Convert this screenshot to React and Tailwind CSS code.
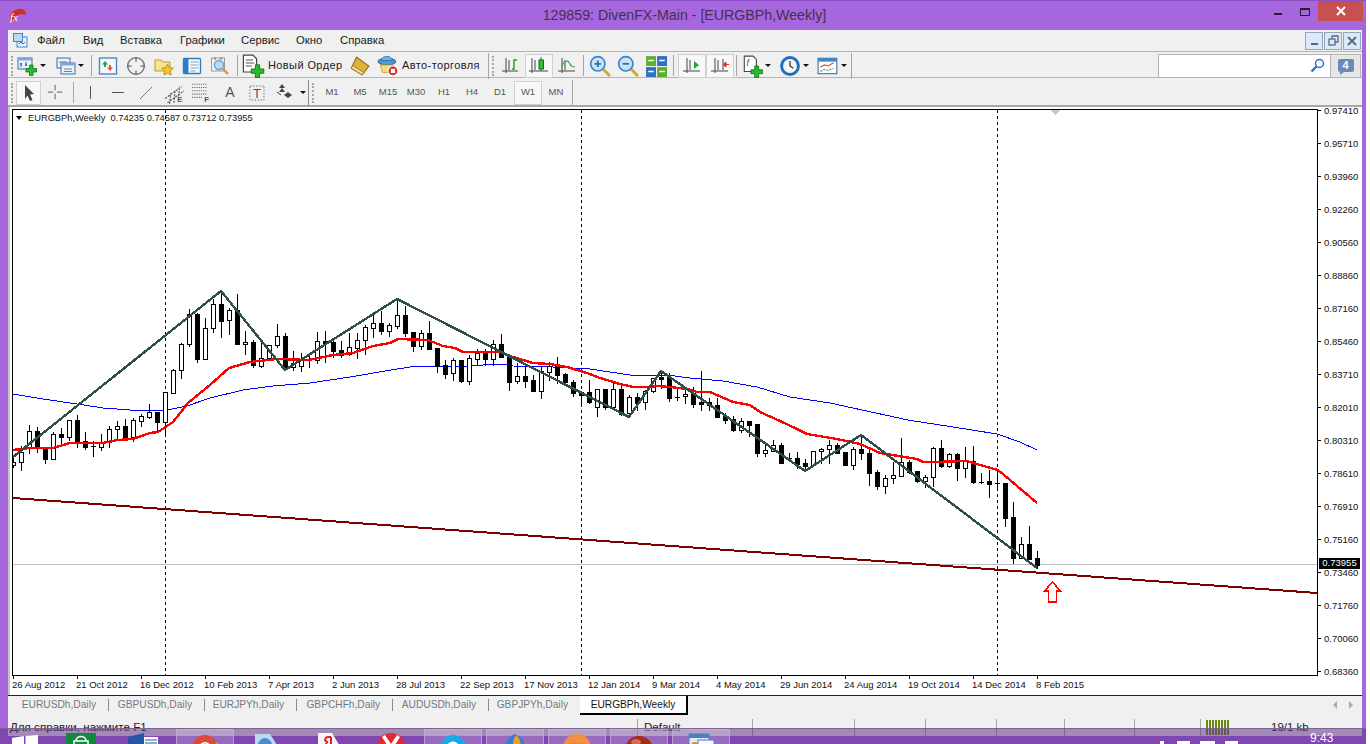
// MT4 terminal window - EURGBPh weekly chart
import { Crosshair } from 'lucide-react';

const PRICES = ['0.97410','0.95710','0.93960','0.92260','0.90560','0.88860','0.87160','0.85460','0.83710','0.82010','0.80310','0.78610','0.76910','0.75160','0.73460','0.71760','0.70060','0.68360'];
const DATES = ['26 Aug 2012','21 Oct 2012','16 Dec 2012','10 Feb 2013','7 Apr 2013','2 Jun 2013','28 Jul 2013','22 Sep 2013','17 Nov 2013','12 Jan 2014','9 Mar 2014','4 May 2014','29 Jun 2014','24 Aug 2014','19 Oct 2014','14 Dec 2014','8 Feb 2015'];
const MENU = [['Файл', 'w-[46px]'], ['Вид', 'w-[37px]'], ['Вставка', 'w-[60px]'], ['Графики', 'w-[61px]'], ['Сервис', 'w-[55px]'], ['Окно', 'w-[44px]'], ['Справка', 'w-[60px]']];
const TABS = [['EURUSDh,Daily', 'w-[101px]'], ['GBPUSDh,Daily', 'w-[96px]'], ['EURJPYh,Daily', 'w-[92px]'], ['GBPCHFh,Daily', 'w-[96px]'], ['AUDUSDh,Daily', 'w-[96px]'], ['GBPJPYh,Daily', 'w-[91px]']];
const PERIODS = ['M1', 'M5', 'M15', 'M30', 'H1', 'H4', 'D1', 'W1', 'MN'];
const STATUS = ['w-[115px]', 'w-[102px]', 'w-[71px]', 'w-[71px]', 'w-[68px]', 'w-[70px]', 'w-[66px]'];

// top, bottom, wick top, wick bottom, black? - one bar every 8px starting at x=13
const CANDLES = [
  [462,465,458,467,0],[452,462,446,470,0],[431,448,425,453,0],[431,448,427,452,1],[449,459,448,463,1],[434,459,432,459,0],[434,437,428,444,1],[420,437,420,440,0],
  [420,442,415,447,1],[441,447,432,449,1],[446,446,441,456,1],[443,447,434,450,0],[429,442,426,447,0],[426,429,421,438,0],[426,438,419,439,1],[420,437,418,441,0],
  [416,421,414,426,0],[412,417,404,418,0],[412,422,412,432,1],[392,422,392,433,0],[370,393,369,393,0],[344,370,343,378,0],[314,344,309,346,0],[314,359,313,362,1],
  [328,359,318,359,0],[304,328,299,332,0],[304,321,291,337,1],[310,320,308,334,0],[310,344,294,344,1],[342,344,331,354,0],[342,365,340,367,1],[358,366,340,367,0],
  [345,358,345,360,0],[336,345,324,347,0],[336,367,333,367,1],[363,367,351,370,0],[360,366,353,371,0],[360,360,353,367,1],[341,360,332,363,0],[341,343,331,362,1],
  [342,351,341,357,1],[350,355,341,357,1],[347,354,333,355,0],[340,348,333,358,0],[327,340,325,354,0],[323,328,315,337,0],[323,331,311,334,1],[325,331,323,336,0],
  [315,326,300,328,0],[315,333,306,336,1],[332,346,332,351,1],[333,346,330,349,0],[333,349,321,349,1],[348,366,348,372,1],[365,374,360,378,1],[360,373,358,380,0],
  [360,381,360,382,1],[358,381,355,384,0],[353,359,349,365,0],[353,359,349,365,1],[344,359,340,365,0],[344,357,334,357,1],[355,382,355,390,1],[376,381,363,383,0],
  [376,381,363,387,1],[380,391,375,391,1],[371,391,367,398,0],[366,372,362,380,0],[366,375,357,383,1],[374,382,373,385,1],[382,393,380,396,1],[392,395,391,406,1],
  [392,402,380,403,1],[389,407,389,416,0],[389,407,389,409,1],[389,407,383,408,0],[389,414,383,415,1],[397,413,395,417,0],[397,403,393,410,1],[391,402,390,409,0],
  [378,391,378,392,0],[377,379,371,388,1],[377,398,373,401,1],[397,397,387,400,1],[394,396,388,403,0],[393,404,387,407,1],[402,404,371,410,1],[402,405,398,410,1],
  [405,417,398,417,1],[416,420,413,423,1],[419,430,416,431,1],[421,430,418,432,0],[421,425,421,436,1],[424,453,424,456,1],[450,453,444,456,0],[445,451,440,451,0],
  [445,463,443,463,1],[458,458,453,460,1],[458,464,452,468,1],[463,466,459,471,1],[451,465,451,466,0],[449,451,448,463,0],[445,449,440,463,0],[445,453,443,453,1],
  [452,465,452,465,1],[449,465,447,469,0],[449,453,435,459,1],[453,473,448,485,1],[472,486,470,489,1],[478,486,475,493,0],[475,478,462,483,0],[462,476,438,476,0],
  [462,472,460,473,1],[471,481,471,482,1],[477,481,475,487,0],[448,477,447,486,0],[448,466,440,467,1],[454,466,453,467,0],[454,468,453,480,1],[461,468,447,477,0],
  [461,482,446,483,1],[482,482,473,483,1],[481,484,470,497,1],[483,483,470,489,1],[483,518,483,526,1],[517,558,502,563,1],[544,558,537,558,0],[544,559,526,559,1],[558,565,551,568,1],
];

const ZIGZAG = '13,457 221,291 285,370 397,299 629,417 661,371 805,471 861,435 1037,568';
const RED_MA = '13,450 30,448 53,448 70,443 103,443 117,440 133,439 150,433 158,432 173,422 188,403 210,385 229,368 250,362 277,359 309,360 333,355 353,353 373,346 390,343 398,339 428,340 443,346 455,348 463,352 500,352 513,357 533,363 550,364 567,367 587,373 600,378 620,384 633,387 650,387 657,386 670,387 687,389 697,392 710,392 733,402 750,405 760,412 780,421 797,429 807,434 837,439 860,444 880,453 917,459 923,462 933,462 967,461 980,465 998,470 1010,480 1037,503';
const BLUE_MA = '13,394 43,399 77,404 103,408 130,410 167,410 187,406 210,398 243,390 273,386 310,383 350,377 397,369 417,366 467,366 500,364 513,366 553,367 590,369 630,375 667,375 690,378 723,381 757,387 790,397 830,403 908,420 953,427 997,434 1020,442 1037,450';

const Grip = () => <div className="h-[20px] w-[3px] border-l-2 border-dotted border-[#a8a8a8]" />;
const Sep = ({ className = '' }) => <div className={`h-[21px] w-px shrink-0 bg-[#a6a6a6] ${className}`} />;
const Caret = ({ className = 'w-[10px]' }) => (
  <div className={`flex shrink-0 justify-center ${className}`}>
    <div className="h-0 w-0 border-x-[3px] border-t-[3px] border-x-transparent border-t-[#111]" />
  </div>
);

const Cell = ({ className = 'w-[28px]', active, children }) => (
  <div className={`flex h-[24px] shrink-0 items-center justify-center ${className} ${active ? 'border border-[#d0d0d0] bg-[#f8f8f8]' : ''}`}>
    {children}
  </div>
);

const Ic = ({ children, size = 20 }) => (
  <svg width={size} height={size} viewBox="0 0 20 20" fill="none">{children}</svg>
);

const Plus = ({ x = 9, y = 9 }) => (
  <path transform={`translate(${x} ${y})`} d="M3.500 0h3.500v3.500h3.500v3.500h-3.500v3.500h-3.500v-3.500h-3.500v-3.500h3.500z" fill="#2eb82e" stroke="#0d7a1c" strokeWidth="0.8" />
);

const IconNewChart = () => (
  <Ic>
    <rect x="1" y="2" width="14" height="11" fill="#eaf2fb" stroke="#3c6ea8" />
    <rect x="1" y="2" width="14" height="2.500" fill="#7fa8d8" />
    <path d="M4 7v4M3 8h2M9 6v4M8 9h2" stroke="#2a4f7c" />
    <Plus />
  </Ic>
);
const IconProfiles = () => (
  <Ic>
    <rect x="1" y="2" width="13" height="10" fill="#eaf2fb" stroke="#3c6ea8" />
    <rect x="5" y="7" width="14" height="11" fill="#eaf2fb" stroke="#3c6ea8" />
    <rect x="5" y="7" width="14" height="2.500" fill="#7fa8d8" />
    <path d="M8 13h8M8 15.500h8M3 6h8" stroke="#6c7f92" />
  </Ic>
);
const IconMarket = () => (
  <Ic>
    <rect x="1.500" y="2" width="17" height="16" fill="#f4f8fc" stroke="#4a88c7" strokeWidth="1.400" />
    <path d="M7 5l3 3.500H8V11H6V8.500H4z" fill="#25a244" />
    <path d="M12 15l-3-3.500h2V9h2v2.500h2z" fill="#e8532c" />
  </Ic>
);
const IconFolderStar = () => (
  <Ic>
    <path d="M1 4h6l2 2h7v9H1z" fill="#fbe28e" stroke="#b99a3e" />
    <path d="M13.500 8l1.800 3.600 4 .6-2.900 2.800.7 4-3.600-1.900-3.600 1.900.7-4-2.900-2.800 4-.6z" fill="#f5c52c" stroke="#a88316" strokeWidth="0.8" />
  </Ic>
);
const IconNavigator = () => (
  <Ic>
    <rect x="1.500" y="2.500" width="17" height="15" rx="1" fill="#f6fafd" stroke="#2f7cc4" strokeWidth="1.400" />
    <rect x="1.500" y="2.500" width="5" height="15" fill="#2f7cc4" />
    <path d="M8.500 6h8M8.500 9h8M8.500 12h8M8.500 15h5" stroke="#8aa3ba" />
  </Ic>
);
const IconTester = () => (
  <Ic>
    <rect x="1.500" y="2" width="13" height="13" fill="#f0f0f0" stroke="#9a9a9a" />
    <path d="M5 1v3M11 1v3" stroke="#777" />
    <circle cx="9" cy="9" r="4.500" fill="#bcd9f2" stroke="#6fa0c8" strokeWidth="1.400" />
    <path d="M12.500 12.500L18 18" stroke="#c9a02d" strokeWidth="2.400" />
  </Ic>
);
const IconOrder = () => (
  <Ic size={24}>
    <path d="M2 1h8l3 3v11H2z" fill="#fff" stroke="#444" />
    <path d="M4 5h6M4 7.500h7M4 10h5" stroke="#555" />
    <Plus x={8.5} y={9} />
  </Ic>
);
const IconBook = () => (
  <Ic size={22}>
    <path d="M7 2l11 8-6 8L2 12z" fill="#e3b23c" stroke="#8c6a18" />
    <path d="M2 12l10 6 1.500-2L4 10" fill="#f5e2a5" stroke="#8c6a18" strokeWidth="0.7" />
  </Ic>
);
const IconAuto = () => (
  <Ic size={22}>
    <ellipse cx="9" cy="6" rx="8" ry="3" fill="#4f9ad6" stroke="#2c6a9e" />
    <path d="M4 5c0-5 10-5 10 0z" fill="#6cb2e6" stroke="#2c6a9e" strokeWidth="0.7" />
    <path d="M3 9l12 0-1 7H5z" fill="#f7dc6f" stroke="#b99a3e" strokeWidth="0.7" />
    <circle cx="14.500" cy="14.500" r="4.500" fill="#d92020" stroke="#fff" />
    <rect x="12.500" y="12.500" width="4" height="4" fill="#fff" />
  </Ic>
);
const IconBars = () => (
  <Ic><path d="M5 2v15M1 15h16M8 4v10" stroke="#444" /><path d="M11 13h2V4h3" stroke="#1e9e2d" strokeWidth="1.400" /></Ic>
);
const IconCandles = () => (
  <Ic><path d="M3 2v15M0 15h19M6 4v10" stroke="#444" /><rect x="10" y="4" width="4.500" height="9" fill="#2bc03e" stroke="#116e1b" /><path d="M12 1v3M12 13v2" stroke="#116e1b" /></Ic>
);
const IconLine = () => (
  <Ic><path d="M5 2v15M1 15h17M8 4v10" stroke="#444" /><path d="M5 11c2-8 6-7 8-3 1 2 3 3 5 3" stroke="#3ca24a" strokeWidth="1.200" /></Ic>
);
const IconZoom = ({ minus }) => (
  <Ic size={22}>
    <circle cx="8" cy="8" r="6.500" fill="#c8e2f6" stroke="#3a86c8" strokeWidth="1.500" />
    <path d={minus ? 'M5 8h6' : 'M5 8h6M8 5v6'} stroke="#2a6fb0" strokeWidth="1.600" />
    <path d="M13 13l6 6" stroke="#d2a62a" strokeWidth="2.600" />
  </Ic>
);
const IconTile = () => (
  <Ic size={22}>
    <rect x="1" y="1" width="9" height="9" fill="#5cae2e" /><rect x="11" y="1" width="9" height="9" fill="#2f6fc4" />
    <rect x="1" y="11" width="9" height="9" fill="#2f6fc4" /><rect x="11" y="11" width="9" height="9" fill="#5cae2e" />
    <path d="M3 5h5M13 5h5M3 15h5M13 15h5" stroke="#fff" strokeWidth="1.500" />
  </Ic>
);
const IconScroll = () => (
  <Ic><path d="M5 2v15M1 15h17M8 4v10" stroke="#444" /><path d="M12 5l5 4-5 4z" fill="#2aa63a" /></Ic>
);
const IconShift = () => (
  <Ic><path d="M5 2v15M1 15h17M8 4v10M13 3v11" stroke="#444" /><path d="M19 8.500h-3M16 6l-3 2.500 3 2.500z" fill="#d9361e" stroke="#d9361e" /></Ic>
);
const IconIndicators = () => (
  <Ic size={24}>
    <path d="M3 1h8l3 3v11H3z" fill="#fff" stroke="#444" />
    <text x="5" y="10" fontSize="8" fontStyle="italic" fill="#444">f</text>
    <Plus x={9} y={10} />
  </Ic>
);
const IconClock = () => (
  <Ic size={24}>
    <circle cx="10" cy="10" r="9" fill="#1f6fb8" />
    <circle cx="10" cy="10" r="6.300" fill="#f5f5f5" />
    <path d="M10 5.500V10l3 2" stroke="#333" strokeWidth="1.200" />
  </Ic>
);
const IconTemplate = () => (
  <Ic size={24}>
    <rect x="1" y="3" width="17" height="14" fill="#fff" stroke="#3d6da0" />
    <rect x="1" y="3" width="17" height="3" fill="#3d86c8" />
    <path d="M3 11l4-2 3 1 5-3" stroke="#c9502e" />
    <path d="M3 15l4-2 3 1 5-2" stroke="#3aa04a" strokeDasharray="2 1" />
  </Ic>
);

const CursorIcon = () => (
  <Ic><path d="M6 2l9 9-4 .5 2.500 5.500-2.500 1-2.500-5.500L6 16z" fill="#444" /></Ic>
);
const ThinCross = () => (
  <Ic size={18}><path d="M9 1v6M9 11v6M1 9h6M11 9h6" stroke="#555" /></Ic>
);
const ChannelIcon = () => (
  <Ic size={22}>
    <path d="M2 15L17 4M4 19L19 8M6 20l1-10M10 19l1-12M14 16l1-12" stroke="#555" strokeDasharray="2 1" />
    <text x="13" y="18" fontSize="7" fontWeight="700" fill="#555">E</text>
  </Ic>
);
const FiboIcon = () => (
  <Ic size={22}>
    <path d="M1 2h14M1 5h14M1 8h14M1 11h14M1 14h10" stroke="#666" strokeDasharray="1 1" />
    <text x="12" y="18" fontSize="7" fontWeight="700" fill="#555">F</text>
  </Ic>
);
const LabelIcon = () => (
  <Ic>
    <rect x="2" y="3" width="14" height="14" stroke="#777" strokeDasharray="1.500 1.500" />
    <text x="9" y="15" fontSize="13" textAnchor="middle" fill="#555">T</text>
  </Ic>
);
const ArrowsIcon = () => (
  <Ic><path d="M6 1l3 4H3zM6 5l3 4H3z" fill="#444" /><path d="M8 12l4-3 4 3-4 3z" fill="#444" /><path d="M1 9l4 3" stroke="#444" /></Ic>
);

const Chart = () => (
  <svg className="block" width="1304" height="565" viewBox="13 110 1304 565" shapeRendering="crispEdges" fill="none">
    <path d="M1050 110h10l-5 5z" fill="#c8c8c8" />
    <path d="M13 564.500h1304" stroke="#c0c0c0" />
    <path d="M165.500 110v565M581.500 110v565M997.500 110v565" stroke="#000" strokeDasharray="3 3" />
    <polyline points={BLUE_MA} stroke="#0000ff" />
    {CANDLES.map(([top, bot, wt, wb, black], i) => {
      const x = 13 + i * 8;
      return (
        <g key={i}>
          <path d={`M${x + 0.5} ${wt}V${wb + 1}`} stroke="#000" />
          {top === bot ? (
            <path d={`M${x - 2} ${top + 0.5}h5`} stroke="#000" />
          ) : (
            <rect x={x - 1.5} y={top + 0.5} width="4" height={bot - top} fill={black ? '#000' : '#fff'} stroke="#000" />
          )}
        </g>
      );
    })}
    <polyline points={RED_MA} stroke="#ff0000" strokeWidth="2.400" />
    <polyline points={ZIGZAG} stroke="#2f4f4f" strokeWidth="2.400" />
    <path d="M13 498L1317 593" stroke="#800000" strokeWidth="2" />
    <path d="M1052.500 582l8 9h-4v11h-8v-11h-4z" fill="#fff" stroke="#ff0000" strokeWidth="1.500" />
  </svg>
);

const TaskIcons = [
  <svg key="store" width="30" height="16" viewBox="0 0 30 16"><rect y="1" width="30" height="15" fill="#0f8a3c" /><path d="M10 9c0-6 10-6 10 0M8 9h14v7H8z" stroke="#fff" strokeWidth="1.500" fill="none" /></svg>,
  <svg key="word" width="30" height="16" viewBox="0 0 30 16"><path d="M0 5L16 1v15H0z" fill="#2456a6" /><rect x="16" y="5" width="14" height="11" fill="#fff" /><path d="M17 8h12M17 11h12" stroke="#2456a6" /></svg>,
  <svg key="chrome" width="28" height="16" viewBox="0 0 28 16"><circle cx="14" cy="15" r="13" fill="#dd4b39" /><path d="M14 15L26 10a13 13 0 0 1 1 5z" fill="#f5c518" /><circle cx="14" cy="15" r="6" fill="#fff" /><circle cx="14" cy="15" r="4.500" fill="#4a8af4" /></svg>,
  <svg key="blue" width="30" height="16" viewBox="0 0 30 16"><path d="M3 2h15l9 14H3z" fill="#bcd8f2" /><path d="M12 6a8 8 0 0 1 8 10H6a8 8 0 0 1 6-10z" fill="#4a8cd0" /></svg>,
  <svg key="ya" width="30" height="16" viewBox="0 0 30 16"><path d="M4 1h14l9 15H4z" fill="#f6f6f6" /><path d="M17 5v11M17 5h-3c-3 0-4 4-1 5l-3 6" stroke="#e02020" strokeWidth="2" fill="none" /></svg>,
  <svg key="yab" width="30" height="16" viewBox="0 0 30 16"><circle cx="15" cy="15" r="14" fill="#e32b2b" /><path d="M9 3l6 9 6-9 3 2-7 11h-4L6 5z" fill="#fff" /></svg>,
  <svg key="skype" width="28" height="16" viewBox="0 0 28 16"><circle cx="14" cy="15" r="13" fill="#19a9e5" /><circle cx="14" cy="15" r="5" fill="none" stroke="#fff" strokeWidth="3" /></svg>,
  <svg key="fire" width="24" height="16" viewBox="0 0 24 16"><path d="M12 1c8 3 10 9 10 15H2C2 9 6 3 12 1z" fill="#2b7fd6" /><path d="M13 2c5 4 5 9 4 14h-6c-2-6-1-10 2-14z" fill="#f59b23" /></svg>,
  <svg key="orange" width="30" height="16" viewBox="0 0 30 16"><circle cx="15" cy="15" r="14" fill="#f2913d" /><path d="M5 11h20v5H5z" fill="#f8e3c6" /><path d="M7 11h16" stroke="#c66a1e" strokeDasharray="1 1" /></svg>,
  <svg key="mt4" width="30" height="16" viewBox="0 0 30 16"><circle cx="15" cy="17" r="14" fill="#a82a18" /><ellipse cx="12" cy="9" rx="5" ry="3" fill="#d66a55" /></svg>,
  <svg key="win" width="30" height="16" viewBox="0 0 30 16"><rect x="3" y="1" width="20" height="15" fill="#dfe9f5" stroke="#4a80c0" /><rect x="3" y="1" width="20" height="4" fill="#4a80c0" /><rect x="12" y="7" width="16" height="9" fill="#f4f8fc" stroke="#4a80c0" /><circle cx="9" cy="13" r="4" fill="#d98a2b" /></svg>,
];
const BOXED = [false, false, true, false, false, false, true, true, true, true, true];

export default function App() {
  return (
    <div className="relative h-[744px] w-[1366px] overflow-hidden border-t border-[#8a4fc4] bg-[#a566de] font-['Liberation_Sans',sans-serif] text-black">
      {/* title bar */}
      <div className="flex h-[29px] items-start">
        <div className="flex h-[29px] w-[98px] items-center pl-[9px]">
          <div className="relative h-[15px] w-[18px]">
            <svg width="18" height="15" viewBox="0 0 18 15"><path d="M1 9C2 3 8 0 13 1c3 .5 4 3 4 6-3-1-6-1-8 0-2 1-3 3-3 6C3 13 1 12 1 9z" fill="#c8322c" /></svg>
            <span className="absolute left-[1px] top-[3px] font-['Liberation_Serif',serif] text-[11px] italic leading-[12px] text-white">fx</span>
          </div>
        </div>
        <div className="flex h-[29px] flex-1 items-center justify-center text-[14.200px] text-[#45304f]">129859: DivenFX-Main - [EURGBPh,Weekly]</div>
        <div className="flex h-[21px] w-[95px] items-start">
          <div className="ml-[3px] mt-[12px] h-[2px] w-[8px] bg-[#222]" />
          <div className="ml-[18px] mt-[7px] h-[8px] w-[10px] border border-t-2 border-[#222]" />
          <div className="ml-[8px] flex h-[20px] w-[45px] items-center justify-center bg-[#c75050]">
            <svg width="10" height="10" viewBox="0 0 10 10"><path d="M1 1l8 8M9 1l-8 8" stroke="#fff" strokeWidth="2" /></svg>
          </div>
        </div>
      </div>

      {/* window body */}
      <div className="mx-[8px] flex h-[706px] w-[1354px] flex-col bg-[#f0f0f0]">
        {/* menu */}
        <div className="flex h-[21px] shrink-0 items-center text-[11.300px] text-[#1a1a1a]">
          <div className="ml-[5px] mr-[8px] w-[16px]">
            <svg width="15" height="15" viewBox="0 0 15 15"><rect x="4" y="4" width="10" height="10" fill="#eaf2fb" stroke="#3c86c8" /><rect x=".5" y=".5" width="9" height="8" fill="#bcd9f2" stroke="#3c86c8" /><path d="M6 11l2-2 2 2 2-2" stroke="#2a5f96" fill="none" /></svg>
          </div>
          {MENU.map(([item, w]) => <span key={item} className={w}>{item}</span>)}
          <div className="ml-auto flex h-[19px] items-center pr-[1px]">
            <div className="flex h-[18px] w-[18px] items-center justify-center border border-[#8fa8bd] bg-[#dceaf7]"><div className="mt-[6px] h-[2px] w-[7px] bg-[#5b6b7a]" /></div>
            <div className="ml-px flex h-[18px] w-[18px] items-center justify-center border border-[#8fa8bd] bg-[#dceaf7]">
              <svg width="11" height="11" viewBox="0 0 11 11" fill="none" stroke="#5b6b7a" strokeWidth="1.300"><rect x="1" y="4" width="6" height="6" /><path d="M4 4V1h6v6H7" /></svg>
            </div>
            <div className="ml-px flex h-[18px] w-[18px] items-center justify-center border border-[#8fa8bd] bg-[#dceaf7]">
              <svg width="10" height="10" viewBox="0 0 10 10"><path d="M1 1l8 8M9 1l-8 8" stroke="#5b6b7a" strokeWidth="2" /></svg>
            </div>
          </div>
        </div>

        {/* toolbar row 1 */}
        <div className="flex h-[27px] shrink-0 items-center border-y border-[#b4b4b4] pt-[2px]">
          <div className="flex w-[8px] shrink-0 justify-center pl-[1px]"><Grip /></div>
          <Cell className="w-[22px]"><IconNewChart /></Cell>
          <Caret />
          <Cell className="ml-[7px] w-[22px]"><IconProfiles /></Cell>
          <Caret className="w-[8px]" />
          <Sep className="ml-[6px]" />
          <Cell className="ml-[2px] w-[28px]"><IconMarket /></Cell>
          <Cell><Crosshair size={20} color="#666" strokeWidth={1.5} /></Cell>
          <Cell><IconFolderStar /></Cell>
          <Cell><IconNavigator /></Cell>
          <Cell><IconTester /></Cell>
          <Sep className="ml-[3px]" />
          <Cell className="ml-[3px] w-[24px]"><IconOrder /></Cell>
          <span className="ml-[3px] w-[74px] shrink-0 whitespace-nowrap text-[11px] tracking-[0.4px] text-[#222]">Новый Ордер</span>
          <Cell className="ml-[7px] w-[22px]"><IconBook /></Cell>
          <Cell className="ml-[6px] w-[22px]"><IconAuto /></Cell>
          <span className="ml-[3px] w-[78px] shrink-0 whitespace-nowrap text-[11px] tracking-[0.4px] text-[#222]">Авто-торговля</span>
          <Sep className="ml-[8px] !h-[26px]" />
          <div className="ml-[3px] w-[5px] shrink-0"><Grip /></div>
          <Cell className="w-[28px]"><IconBars /></Cell>
          <Cell className="w-[28px]" active><IconCandles /></Cell>
          <Cell><IconLine /></Cell>
          <Sep className="ml-[2px]" />
          <Cell className="ml-[2px] w-[28px]"><IconZoom /></Cell>
          <Cell><IconZoom minus /></Cell>
          <Cell><IconTile /></Cell>
          <Sep className="ml-[3px]" />
          <Cell className="ml-[4px] w-[28px]" active><IconScroll /></Cell>
          <Cell active><IconShift /></Cell>
          <Sep className="ml-[2px]" />
          <Cell className="ml-[4px] w-[22px]"><IconIndicators /></Cell>
          <Caret />
          <Cell className="ml-[6px] w-[22px]"><IconClock /></Cell>
          <Caret />
          <Cell className="ml-[6px] w-[22px]"><IconTemplate /></Cell>
          <Caret />
          <Sep className="ml-[2px] !h-[26px]" />
          <div className="ml-auto flex h-[24px] items-center pr-[1px]">
            <div className="flex h-[24px] w-[173px] items-center justify-end border border-[#b4b4b4] bg-white pr-[5px]">
              <svg width="15" height="15" viewBox="0 0 15 15" fill="none"><circle cx="9.500" cy="5.500" r="4" stroke="#2f6fd0" strokeWidth="1.500" /><path d="M6.500 8.500L1.500 13.500" stroke="#2f6fd0" strokeWidth="2.400" /></svg>
            </div>
            <div className="flex h-[24px] w-[30px] items-center justify-center border-y border-r border-[#b4b4b4] bg-[#e6e6e6]">
              <div className="relative flex h-[13px] w-[16px] items-center justify-center rounded-[2px] bg-[#6b8ab8] text-[11px] font-bold leading-none text-white">
                4
                <div className="absolute left-[2px] top-[13px] h-0 w-0 border-r-[4px] border-t-[3px] border-r-transparent border-t-[#6b8ab8]" />
              </div>
            </div>
          </div>
        </div>

        {/* toolbar row 2 */}
        <div className="flex h-[29px] shrink-0 items-center border-b-2 border-[#a8a8a8] pt-[2px] text-[9.500px] text-[#555]">
          <div className="flex w-[8px] shrink-0 justify-center pl-[1px]"><Grip /></div>
          <Cell className="w-[25px]" active><CursorIcon /></Cell>
          <Cell className="w-[30px]"><ThinCross /></Cell>
          <Sep className="ml-[2px]" />
          <Cell className="ml-[2px] w-[28px]"><div className="h-[13px] w-px bg-[#555]" /></Cell>
          <Cell><div className="h-px w-[12px] bg-[#555]" /></Cell>
          <Cell><svg width="14" height="14" viewBox="0 0 14 14"><path d="M1 13L13 1" stroke="#777" /></svg></Cell>
          <Cell><ChannelIcon /></Cell>
          <Cell><FiboIcon /></Cell>
          <Cell><span className="text-[14px] text-[#555]">A</span></Cell>
          <Cell><LabelIcon /></Cell>
          <Cell><ArrowsIcon /></Cell>
          <Caret className="w-[6px]" />
          <Sep className="ml-[2px] !h-[26px] !bg-[#8f8f8f]" />
          <div className="ml-[3px] w-[6px] shrink-0"><Grip /></div>
          {PERIODS.map((p) => (
            <Cell key={p} className="w-[28px]" active={p === 'W1'}>{p}</Cell>
          ))}
          <Sep className="ml-[2px] !h-[26px]" />
        </div>

        {/* chart, price axis, dates */}
        <div className="flex h-[588px] shrink-0 bg-white text-[9.500px] text-[#111]">
          <div className="w-[4px] shrink-0 border-l-2 border-[#c4c4c4]" />
          <div className="w-[1306px] shrink-0 pt-[2px]">
            <div className="relative h-[567px] border border-black">
              <Chart />
              <div className="absolute left-[3px] top-[2px] flex items-center whitespace-pre text-[9.300px] leading-[12px]">
                <div className="mr-[6px] h-0 w-0 border-x-[3.500px] border-t-[4px] border-x-transparent border-t-black" />
                EURGBPh,Weekly  0.74235 0.74587 0.73712 0.73955
              </div>
            </div>
            <div className="flex">
              {DATES.map((d) => (
                <div key={d} className="relative h-[19px] w-[64px] shrink-0 whitespace-nowrap pt-[3px] leading-[12px]">
                  <div className="absolute left-[1px] top-0 h-[3px] w-px bg-black" />
                  {d}
                </div>
              ))}
            </div>
          </div>
          <div className="relative flex flex-1 flex-col gap-[26px]">
            <div className="absolute left-[1px] top-[451px] z-10 flex h-[11px] w-[41px] items-center justify-center bg-black text-white">0.73955</div>
            {PRICES.map((p) => (
              <div key={p} className="flex h-[7px] items-center leading-[7px]">
                <div className="h-px w-[3px] bg-black" />
                <span className="ml-[3px]">{p}</span>
              </div>
            ))}
          </div>
        </div>

        {/* chart tabs */}
        <div className="flex h-[21px] shrink-0 items-start border-t border-[#222] text-[10.200px] text-[#707a84]">
          {TABS.map(([t, w], i) => (
            <div key={t} className={`flex h-[18px] items-center justify-end ${w}`}>
              <span className="pr-[12px]">{t}</span>
              {i < 5 && <div className="h-[12px] w-px bg-[#8a8a8a]" />}
            </div>
          ))}
          <div className="flex h-[19px] w-[108px] items-center justify-center border-b-2 border-r-2 border-black bg-white text-[#111]">EURGBPh,Weekly</div>
          <div className="ml-auto flex h-[18px] items-center gap-[12px] pr-[9px]">
            <div className="h-0 w-0 border-y-[4px] border-r-[4px] border-y-transparent border-r-[#aaa]" />
            <div className="h-0 w-0 border-y-[4px] border-l-[4px] border-y-transparent border-l-[#aaa]" />
          </div>
        </div>

        {/* status bar */}
        <div className="flex flex-1 items-start pt-[3px] text-[11.500px] leading-[14px] text-[#222]">
          <div className="w-[629px] pl-[2px] pt-[1px] text-[11.600px]">Для справки, нажмите F1</div>
          <div className={`h-[17px] border-l border-[#a8a8a8] pl-[6px] pt-[1px] ${STATUS[0]}`}>Default</div>
          {STATUS.slice(1).map((w, i) => (
            <div key={i} className={`h-[17px] border-l border-[#a8a8a8] ${w}`} />
          ))}
          <div className="flex h-[17px] flex-1 border-l border-[#a8a8a8] pl-[5px]">
            <div className="mt-[1px] h-[15px] w-[24px] bg-[repeating-linear-gradient(90deg,#6d8a10_0,#6d8a10_2px,transparent_2px,transparent_3px)]" />
            <span className="ml-[41px] mt-[1px]">19/1 kb</span>
          </div>
        </div>
      </div>

      {/* translucent windows taskbar over the bottom of the window */}
      <div className="absolute bottom-0 left-0 flex h-[16px] w-[1366px] items-start overflow-hidden border-t border-[#7d6296] bg-[rgba(92,42,133,0.52)]">
        <div className="w-[50px] shrink-0 pl-[12px] pt-[6px]">
          <svg width="26" height="10" viewBox="0 0 26 10"><path d="M0 3l12-2v9H0zM13.500 1L26 0v10H13.500z" fill="#fff" /></svg>
        </div>
        {TaskIcons.map((icon, i) => (
          <div key={i} className="flex h-[16px] w-[62px] shrink-0 justify-center">
            <div className={`flex h-[16px] w-[58px] justify-center pt-[3px] ${BOXED[i] ? 'border-x border-t border-[#c4b2d4]/70 bg-white/20' : ''}`}>{icon}</div>
          </div>
        ))}
        <div className="ml-[428px] flex shrink-0 items-start pt-[12px]">
          <div className="h-[4px] w-[4px] bg-white" />
          <div className="ml-[13px] h-[4px] w-[13px] bg-white" />
          <div className="ml-[10px] h-[4px] w-[15px] bg-white" />
          <div className="ml-[10px] h-[4px] w-[13px] bg-white" />
        </div>
        <span className="ml-[72px] shrink-0 pt-[2px] text-[12px] leading-[14px] text-white">9:43</span>
      </div>
    </div>
  );
}
